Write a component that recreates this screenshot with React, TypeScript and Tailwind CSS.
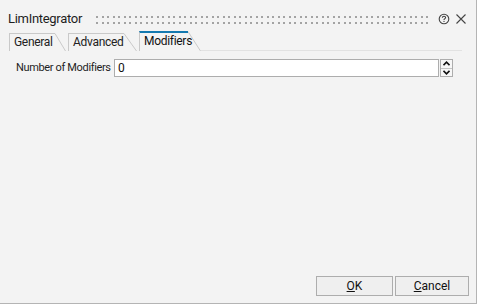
const font = { fontFamily: 'Roboto, "Liberation Sans", sans-serif' };

function Slant({ w, h }: { w: number; h: number }) {
  return (
    <svg width={w} height={h} className="block">
      <line x1="0" y1="0.5" x2={w - 0.5} y2={h} stroke="#c9c9c9" strokeWidth="1" />
    </svg>
  );
}

function Tab({ label, width, slant, active }: { label: string; width: number; slant: number; active?: boolean }) {
  const h = active ? 20 : 18;
  return (
    <div className="flex items-stretch">
      <div
        className={
          active
            ? "h-[20px] border-l border-[#c9c9c9] border-t-2 border-t-[#1479b0] pl-[4px] text-[12px] tracking-[-0.3px] leading-[17px] text-[#111] whitespace-nowrap"
            : "h-[18px] border-l border-t border-[#c9c9c9] pl-[4px] text-[12px] tracking-[-0.3px] leading-[16px] text-[#222] whitespace-nowrap"
        }
        style={{ width }}
      >
        {label}
      </div>
      <Slant w={slant} h={h} />
    </div>
  );
}

function Grip() {
  return (
    <svg className="h-[8px] flex-1" height="8">
      <defs>
        <pattern id="dots" width="11" height="6" patternUnits="userSpaceOnUse">
          <rect x="0" y="0" width="2" height="2" fill="#a3a3a3" />
          <rect x="6" y="0" width="2" height="2" fill="#a3a3a3" />
        </pattern>
      </defs>
      <rect x="0" y="0" width="100%" height="8" fill="url(#dots)" />
    </svg>
  );
}

export default function App() {
  return (
    <div className="w-[478px] h-[305px] bg-white" style={font}>
      <div className="w-[477px] h-[304px] bg-[#f3f3f3] border-r border-b border-[#b4b4b4] flex flex-col">
        {/* title bar */}
        <div className="h-[31px] pt-[6px] pl-[8px] pr-[10px] flex items-center">
          <span className="w-[88px] shrink-0 text-[13px] tracking-[-0.3px] leading-[16px] text-[#1e1e1e]">LimIntegrator</span>
          <div className="mr-[8px] pt-[3px] flex-1 flex">
            <Grip />
          </div>
          <svg width="12" height="12" viewBox="0 0 12 12" className="mr-[6px]">
            <circle cx="6" cy="6" r="4.8" fill="none" stroke="#444" strokeWidth="1.1" />
            <path d="M4.4 4.8 Q4.4 3.3 6 3.3 Q7.6 3.3 7.6 4.6 Q7.6 5.5 6.5 5.9 Q6 6.1 6 7" fill="none" stroke="#444" strokeWidth="1.1" />
            <rect x="5.45" y="7.9" width="1.1" height="1.1" fill="#444" />
          </svg>
          <svg width="10" height="10" viewBox="0 0 10 10">
            <path d="M0.5 0.5 L9.5 9.5 M9.5 0.5 L0.5 9.5" stroke="#444" strokeWidth="1.1" />
          </svg>
        </div>

        {/* tabs */}
        <div className="pl-[9px] pr-[14px] flex items-end gap-[2px]">
          <Tab label="General" width={46} slant={11} />
          <Tab label="Advanced" width={56} slant={13} />
          <Tab label="Modifiers" width={49} slant={13} active />
          <div className="flex-1 border-b border-[#e2e2e2] -ml-[2px]" />
        </div>

        {/* content */}
        <div className="flex-1 pt-[8px] pl-[16px]">
          <div className="flex items-center h-[18px]">
            <span className="w-[98px] shrink-0 whitespace-nowrap text-[11px] tracking-[-0.35px] text-[#1e1e1e] leading-[16px]">
              Number of Modifiers
            </span>
            <div className="w-[325px] h-[18px] bg-white border border-[#adadad] pl-[3px] text-[12px] leading-[16px] text-[#111]">
              0
            </div>
            <div className="ml-[1px] w-[13px] h-[18px] border border-[#adadad] bg-[#f7f7f7] flex flex-col">
              <div className="flex-1 flex items-center justify-center border-b border-[#c4c4c4]">
                <svg width="7" height="5" viewBox="0 0 7 5">
                  <path d="M0.5 4.2 L3.5 1.2 L6.5 4.2" fill="none" stroke="#111" strokeWidth="1.6" />
                </svg>
              </div>
              <div className="flex-1 flex items-center justify-center">
                <svg width="7" height="5" viewBox="0 0 7 5">
                  <path d="M0.5 0.8 L3.5 3.8 L6.5 0.8" fill="none" stroke="#111" strokeWidth="1.6" />
                </svg>
              </div>
            </div>
          </div>
        </div>

        {/* buttons */}
        <div className="flex justify-end gap-[2px] pr-[7px] pb-[7px]">
          <button className="w-[77px] h-[20px] border border-[#adadad] bg-[#efefef] text-[12px] leading-[16px] text-[#111]">
            <span className="underline">O</span>K
          </button>
          <button className="w-[74px] h-[20px] border border-[#adadad] bg-[#efefef] text-[12px] leading-[16px] text-[#111]">
            <span className="underline">C</span>ancel
          </button>
        </div>
      </div>
    </div>
  );
}
